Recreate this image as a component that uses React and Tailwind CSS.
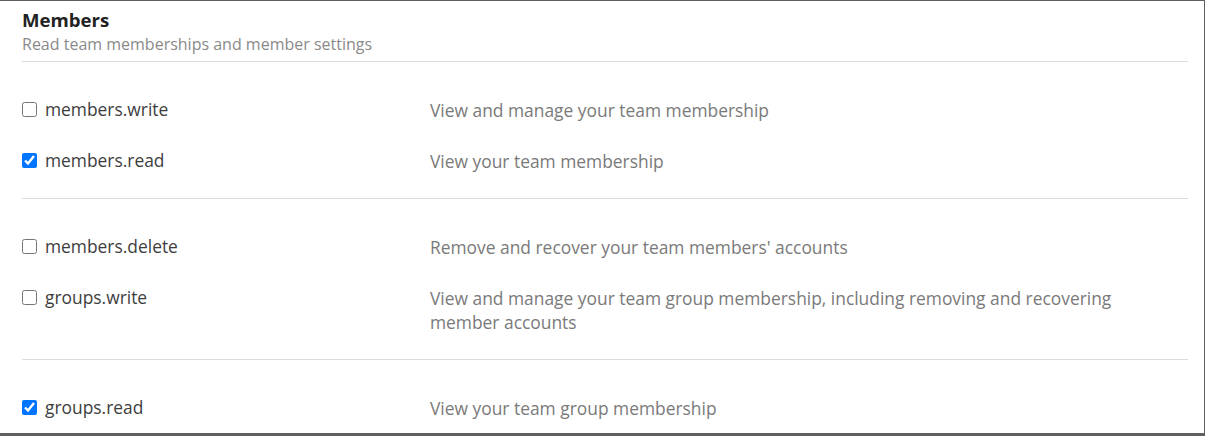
import { useState } from "react";

const groups = [
  [
    { name: "members.write", desc: "View and manage your team membership", checked: false },
    { name: "members.read", desc: "View your team membership", checked: true },
  ],
  [
    { name: "members.delete", desc: "Remove and recover your team members' accounts", checked: false },
    {
      name: "groups.write",
      desc: "View and manage your team group membership, including removing and recovering member accounts",
      checked: false,
    },
  ],
  [{ name: "groups.read", desc: "View your team group membership", checked: true }],
];

const ScopeRow = ({ scope }) => {
  const [checked, setChecked] = useState(scope.checked);
  return (
    <div className="flex items-start py-[13px]">
      <label className="flex items-center w-[408px] shrink-0 h-[25px] gap-[8px] text-[17.4px] text-[#3d3d3d]">
        <input
          type="checkbox"
          checked={checked}
          onChange={(e) => setChecked(e.target.checked)}
          className="w-[15px] h-[15px] m-0 shrink-0"
        />
        <span className="leading-[25px]">{scope.name}</span>
      </label>
      <p className="flex-1 pr-[30px] text-[17.4px] leading-[24px] pt-[1px] text-[#7a7a7a]">{scope.desc}</p>
    </div>
  );
};

export default function App() {
  return (
    <div className="w-full h-[436px] bg-white border-t border-r border-b-[3px] border-[#5f5f5f] font-['Open_Sans',sans-serif] overflow-hidden">
      <div className="pl-[22px] pr-[16px]">
        <div className="pt-[7px] pb-[7px] border-b border-[#dcdcdc]">
          <h2 className="text-[18.6px] leading-[24px] font-bold text-[#222]">Members</h2>
          <p className="mt-[2px] text-[16px] leading-[20px] text-[#8a8a8a]">
            Read team memberships and member settings
          </p>
        </div>
        {groups.map((rows, i) => (
          <div
            key={i}
            className={
              i < groups.length - 1
                ? "pt-[22px] pb-[12px] border-b border-[#dcdcdc]"
                : "pt-[22px]"
            }
          >
            {rows.map((scope) => (
              <ScopeRow key={scope.name} scope={scope} />
            ))}
          </div>
        ))}
      </div>
    </div>
  );
}
